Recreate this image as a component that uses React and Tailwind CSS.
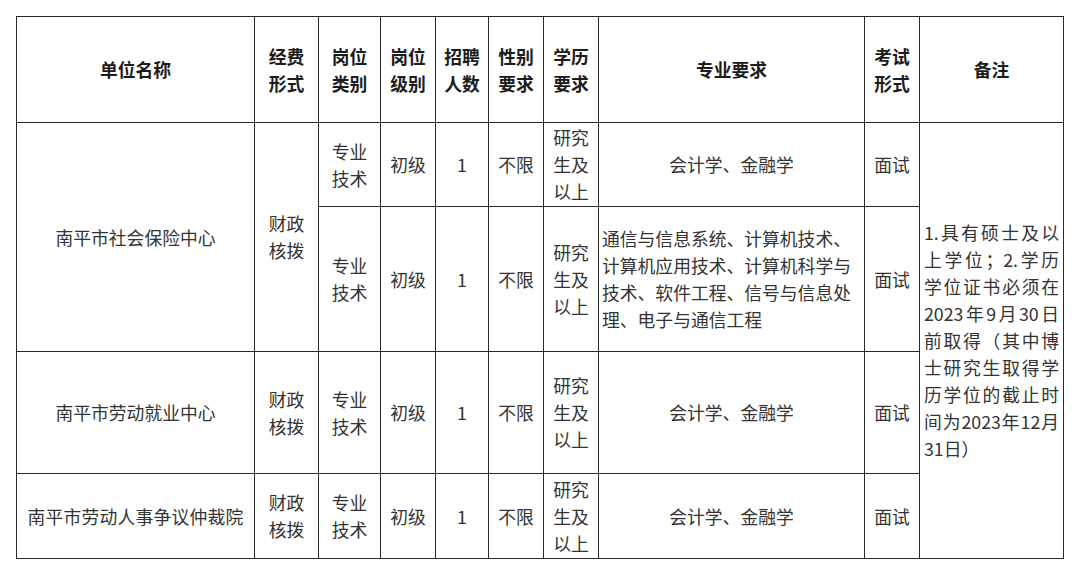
const font = { fontFamily: '"Noto Sans CJK SC", "Noto Sans", sans-serif' }

const colClasses = [
  'w-[238px]', 'w-[64px]', 'w-[62px]', 'w-[55px]', 'w-[53px]',
  'w-[55px]', 'w-[55px]', 'w-[266px]', 'w-[55px]', 'w-[144px]',
]

const cell = 'border-[1.5px] border-[#2a2a2a] text-center align-middle p-0'

function Lines({ items }) {
  return items.map((t, i) => <div key={i}>{t}</div>)
}

const notes = [
  '1.具有硕士及以',
  '上学位；2.学历',
  '学位证书必须在',
  '2023年9月30日',
  '前取得（其中博',
  '士研究生取得学',
  '历学位的截止时',
  '间为2023年12月',
]

function Row({ major, majorLeft }) {
  return (
    <>
      <td className={cell}><Lines items={['专业', '技术']} /></td>
      <td className={cell}>初级</td>
      <td className={cell}>1</td>
      <td className={cell}>不限</td>
      <td className={cell}><Lines items={['研究', '生及', '以上']} /></td>
      <td className={majorLeft ? `${cell} !text-left pl-[3px]` : cell}>{major}</td>
      <td className={cell}>面试</td>
    </>
  )
}

export default function App() {
  return (
    <div className="w-[1080px] h-[576px] bg-white pt-[16px] pl-[16px]" style={font}>
      <table className="table-fixed border-collapse w-[1047px] text-[17.8px] leading-[27px] text-[#333]">
        <colgroup>
          {colClasses.map((c, i) => <col key={i} className={c} />)}
        </colgroup>
        <thead>
          <tr className="h-[106px] font-bold text-[#1c1c1c]">
            <th className={cell}>单位名称</th>
            <th className={cell}><Lines items={['经费', '形式']} /></th>
            <th className={cell}><Lines items={['岗位', '类别']} /></th>
            <th className={cell}><Lines items={['岗位', '级别']} /></th>
            <th className={cell}><Lines items={['招聘', '人数']} /></th>
            <th className={cell}><Lines items={['性别', '要求']} /></th>
            <th className={cell}><Lines items={['学历', '要求']} /></th>
            <th className={cell}>专业要求</th>
            <th className={cell}><Lines items={['考试', '形式']} /></th>
            <th className={cell}>备注</th>
          </tr>
        </thead>
        <tbody>
          <tr className="h-[84px]">
            <td className={cell} rowSpan={2}>南平市社会保险中心</td>
            <td className={cell} rowSpan={2}><Lines items={['财政', '核拨']} /></td>
            <Row major="会计学、金融学" />
            <td className={`${cell} px-[4px]`} rowSpan={4}>
              <div className="text-left">
                {notes.map((t, i) => (
                  <div key={i} className="[text-align-last:justify] text-justify whitespace-nowrap">{t}</div>
                ))}
                <div>31日）</div>
              </div>
            </td>
          </tr>
          <tr className="h-[145px]">
            <Row
              majorLeft
              major={
                <Lines
                  items={[
                    '通信与信息系统、计算机技术、',
                    '计算机应用技术、计算机科学与',
                    '技术、软件工程、信号与信息处',
                    '理、电子与通信工程',
                  ]}
                />
              }
            />
          </tr>
          <tr className="h-[122px]">
            <td className={cell}>南平市劳动就业中心</td>
            <td className={cell}><Lines items={['财政', '核拨']} /></td>
            <Row major="会计学、金融学" />
          </tr>
          <tr className="h-[85px]">
            <td className={`${cell} tracking-[0.2px]`}>南平市劳动人事争议仲裁院</td>
            <td className={cell}><Lines items={['财政', '核拨']} /></td>
            <Row major="会计学、金融学" />
          </tr>
        </tbody>
      </table>
    </div>
  )
}
